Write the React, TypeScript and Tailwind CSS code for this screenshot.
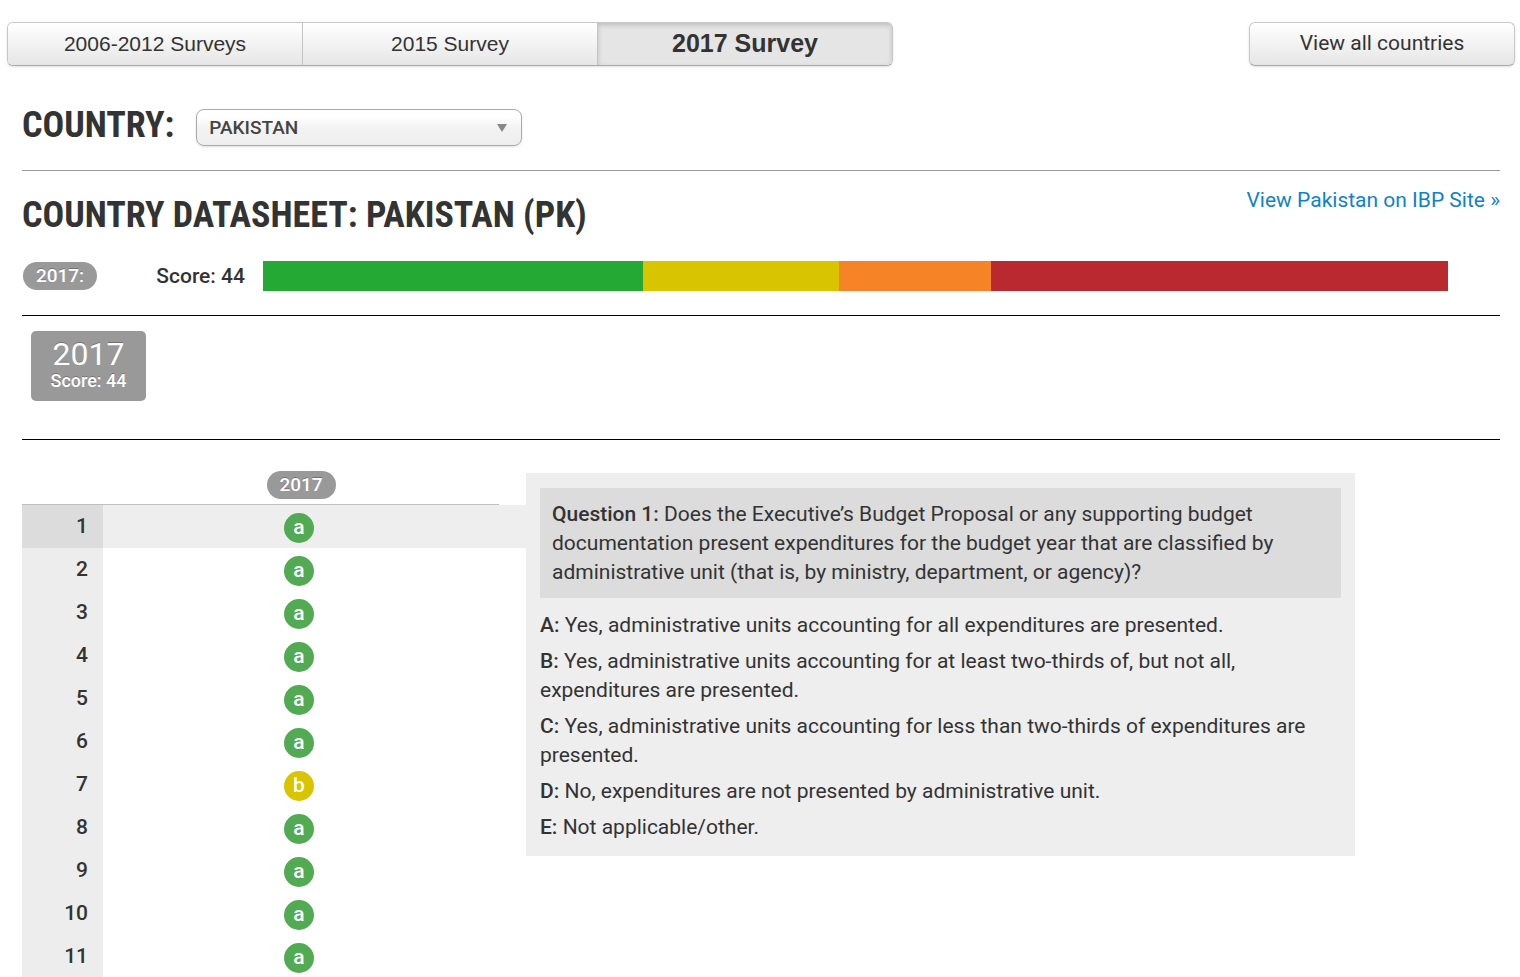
import React, { useState } from 'react';
import clsx from 'clsx';

type Grade = 'a' | 'b' | 'c' | 'd';

interface Answer {
  number: number;
  grade: Grade;
}

const tabs = ['2006-2012 Surveys', '2015 Survey', '2017 Survey'];

const scoreSegments = [
  { grade: 'a', share: 380, cls: 'bg-[#24a934]' },
  { grade: 'b', share: 196, cls: 'bg-[#d9c400]' },
  { grade: 'c', share: 152, cls: 'bg-[#f68426]' },
  { grade: 'd', share: 457, cls: 'bg-[#b9292f]' },
];

const answers: Answer[] = [
  { number: 1, grade: 'a' },
  { number: 2, grade: 'a' },
  { number: 3, grade: 'a' },
  { number: 4, grade: 'a' },
  { number: 5, grade: 'a' },
  { number: 6, grade: 'a' },
  { number: 7, grade: 'b' },
  { number: 8, grade: 'a' },
  { number: 9, grade: 'a' },
  { number: 10, grade: 'a' },
  { number: 11, grade: 'a' },
];

const choices = [
  { label: 'A:', text: 'Yes, administrative units accounting for all expenditures are presented.' },
  {
    label: 'B:',
    text: 'Yes, administrative units accounting for at least two-thirds of, but not all, expenditures are presented.',
  },
  {
    label: 'C:',
    text: 'Yes, administrative units accounting for less than two-thirds of expenditures are presented.',
  },
  { label: 'D:', text: 'No, expenditures are not presented by administrative unit.' },
  { label: 'E:', text: 'Not applicable/other.' },
];

const gradeCls: Record<Grade, string> = {
  a: 'bg-[#52aa52]',
  b: 'bg-[#d9c400]',
  c: 'bg-[#f68426]',
  d: 'bg-[#b9292f]',
};

const headingCls =
  "font-['Roboto_Condensed','Liberation_Sans_Narrow',sans-serif] text-[36px] leading-[44px] font-bold uppercase";

const textShadow = '[text-shadow:0_-1px_0_rgba(0,0,0,0.25)]';

function SurveyTabs() {
  const [active, setActive] = useState('2017 Survey');

  return (
    <div className="flex h-[44px] w-full max-w-[886px] overflow-hidden rounded-md border border-[#c8c8c8] border-b-[#aaa] font-['Liberation_Sans',sans-serif] shadow-sm">
      {tabs.map((tab) => (
        <button
          key={tab}
          type="button"
          onClick={() => setActive(tab)}
          className={clsx(
            'flex-1 border-r border-[#c4c4c4] last:border-r-0',
            tab === active
              ? 'bg-[#e5e5e5] text-[25px] font-bold shadow-[inset_0_2px_5px_rgba(0,0,0,0.18)]'
              : 'bg-linear-to-b from-white to-[#e6e6e6] text-[21px]'
          )}
        >
          {tab}
        </button>
      ))}
    </div>
  );
}

function ScoreBar() {
  return (
    <div className="flex items-center pr-[52px]">
      <span
        className={clsx(
          'ml-px flex h-[28px] w-[74px] items-center justify-center rounded-full bg-[#999] text-[19px] font-medium text-white',
          textShadow
        )}
      >
        2017:
      </span>
      <span className="w-[148px] text-right text-[21px] leading-[30px] font-medium">Score: 44</span>
      <div className="ml-[18px] flex h-[30px] flex-1">
        {scoreSegments.map((segment) => (
          <div key={segment.grade} className={segment.cls} style={{ flexGrow: segment.share }} />
        ))}
      </div>
    </div>
  );
}

function AnswerTable() {
  const [selected, setSelected] = useState(1);

  return (
    <table className="w-[504px] shrink-0 table-fixed border-separate border-spacing-0">
      <colgroup>
        <col className="w-[81px]" />
        <col />
        <col className="w-[27px]" />
      </colgroup>
      <thead>
        <tr>
          <td className="border-b border-[#c0c0c0]" />
          <th scope="col" className="h-[34px] border-b border-[#c0c0c0] p-0 align-top">
            <span
              className={clsx(
                'mx-auto flex h-[28px] w-[69px] items-center justify-center rounded-full bg-[#999] text-[19px] font-medium text-white',
                textShadow
              )}
            >
              2017
            </span>
          </th>
          <td />
        </tr>
      </thead>
      <tbody>
        {answers.map(({ number, grade }) => {
          const isSelected = number === selected;
          return (
            <tr
              key={number}
              onClick={() => setSelected(number)}
              className={clsx('h-[43px] cursor-pointer', isSelected && 'bg-[#eee]')}
            >
              <th
                scope="row"
                className={clsx(
                  'p-0 pr-[15px] text-right text-[21px] font-medium',
                  isSelected ? 'bg-[#dcdcdc]' : 'bg-[#ededed]'
                )}
              >
                {number}
              </th>
              <td className="p-0 pt-[3px] pr-1">
                <span
                  className={clsx(
                    'mx-auto flex size-[30px] items-center justify-center rounded-full text-[21px] font-medium text-white',
                    gradeCls[grade]
                  )}
                >
                  {grade}
                </span>
              </td>
              <td />
            </tr>
          );
        })}
      </tbody>
    </table>
  );
}

function QuestionPanel() {
  return (
    <section className="mt-[2px] w-full max-w-[829px] bg-[#eee] px-[14px] pt-[15px] pb-[14px] text-[21px] leading-[29px]">
      <p className="mb-[13px] bg-[#dcdcdc] px-[12px] pt-[12px] pb-[11px]">
        <strong className="font-medium">Question 1:</strong> Does the Executive’s Budget Proposal or
        any supporting budget documentation present expenditures for the budget year that are
        classified by administrative unit (that is, by ministry, department, or agency)?
      </p>
      <div className="flex flex-col gap-[7px]">
        {choices.map((choice) => (
          <p key={choice.label}>
            <strong className="font-medium">{choice.label}</strong> {choice.text}
          </p>
        ))}
      </div>
    </section>
  );
}

export default function App() {
  const [country, setCountry] = useState('pk');

  return (
    <div className="h-screen overflow-hidden bg-white pt-[22px] font-['Roboto',sans-serif] text-[#333]">
      <header className="flex items-start justify-between gap-6 pr-[5px] pl-[7px]">
        <SurveyTabs />
        <button
          type="button"
          className="h-[44px] w-[266px] shrink-0 rounded-md border border-[#c8c8c8] border-b-[#aaa] bg-linear-to-b from-white to-[#e6e6e6] text-[21px] shadow-sm"
        >
          View all countries
        </button>
      </header>

      <main className="pr-[20px] pl-[22px]">
        {/* Country picker */}
        <div className="flex h-[105px] items-center gap-[22px] border-b border-[#999] pt-[18px]">
          <label htmlFor="country" className={clsx(headingCls, 'pb-1')}>
            Country:
          </label>
          <div className="relative w-[326px]">
            <select
              id="country"
              value={country}
              onChange={(e) => setCountry(e.target.value)}
              className="h-[37px] w-full appearance-none rounded-lg border border-[#aaa] bg-linear-to-b from-white from-20% via-[#f3f3f3] via-50% to-[#eee] px-3 pt-[2px] text-[19px] font-medium text-[#444] shadow-sm"
            >
              <option value="pk">PAKISTAN</option>
            </select>
            <svg
              viewBox="0 0 10 8"
              className="pointer-events-none absolute top-[15px] right-[15px] h-[8px] w-[10px] fill-[#888]"
            >
              <path d="M0 0h10L5 8z" />
            </svg>
          </div>
        </div>

        {/* Datasheet summary */}
        <div className="border-b border-black pb-[24px]">
          <div className="flex h-[90px] items-start justify-between">
            <h1 className={clsx(headingCls, 'pt-[22px]')}>Country Datasheet: Pakistan (PK)</h1>
            <a href="#ibp" className="pt-[15px] text-[21px] leading-[29px] text-[#0e83c8]">
              View Pakistan on IBP Site »
            </a>
          </div>
          <ScoreBar />
        </div>

        <div className="h-[124px] border-b border-black pt-[15px] pl-[9px]">
          <div
            className={clsx(
              'flex h-[70px] w-[115px] flex-col items-center rounded-[5px] bg-[#999] pt-[8px] text-white',
              textShadow
            )}
          >
            <span className="text-[32px] leading-[30px]">2017</span>
            <span className="text-[18px] leading-[24px] font-medium">Score: 44</span>
          </div>
        </div>

        {/* Answers and the selected question */}
        <div className="flex items-start pt-[31px]">
          <AnswerTable />
          <QuestionPanel />
        </div>
      </main>
    </div>
  );
}
